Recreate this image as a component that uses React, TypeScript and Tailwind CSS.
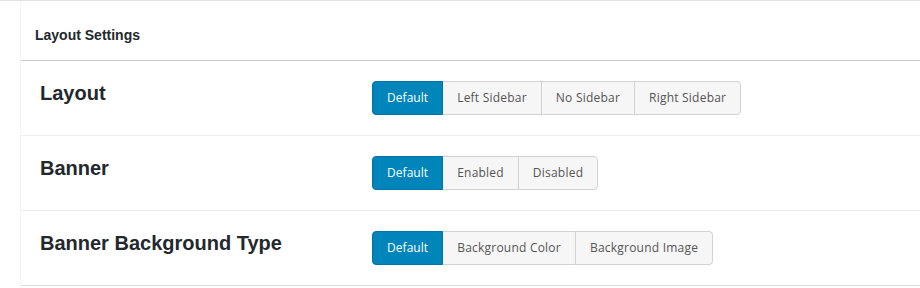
import React from 'react'

type Row = {
  label: string
  options: string[]
}

const rows: Row[] = [
  { label: 'Layout', options: ['Default', 'Left Sidebar', 'No Sidebar', 'Right Sidebar'] },
  { label: 'Banner', options: ['Default', 'Enabled', 'Disabled'] },
  { label: 'Banner Background Type', options: ['Default', 'Background Color', 'Background Image'] },
]

const ButtonGroup = ({ options, value }: { options: string[]; value: string }) => {
  return (
    <div className="flex">
      {options.map((opt, i) => {
        const active = opt === value
        return (
          <button
            key={opt}
            className={`h-[34px] px-[14px] border text-[12px] leading-[16px] font-['Open_Sans',sans-serif] ${
              active ? 'tracking-[0.05px]' : 'tracking-[0.22px]'
            } ${i > 0 ? '-ml-px' : ''} ${i === 0 ? 'rounded-l-[4px]' : ''} ${
              i === options.length - 1 ? 'rounded-r-[4px]' : ''
            } ${
              active
                ? 'relative z-10 bg-[#0085ba] border-[#0073aa] text-white'
                : 'bg-[#f6f6f6] border-[#d2d2d2] text-[#555]'
            }`}
          >
            {opt}
          </button>
        )
      })}
    </div>
  )
}

const SettingRow = ({ row, last }: { row: Row; last: boolean }) => {
  return (
    <div
      className={`flex items-start pl-[19px] pt-[20px] pb-[20px] border-b ${
        last ? 'border-[#dcdcdc]' : 'border-[#eeeeee]'
      }`}
    >
      <div className="w-[332px] mt-[1px] text-[20px] leading-[23px] font-bold text-[#23282d] font-['Liberation_Sans',Arial,sans-serif]">
        {row.label}
      </div>
      <ButtonGroup options={row.options} value="Default" />
    </div>
  )
}

export default function App() {
  return (
    <div className="w-[920px] h-[288px] bg-white border-t border-[#e2e2e2]">
      <div className="ml-[20px] border-l border-[#f4f4f4]">
        <div className="h-[60px] border-b border-[#c9c9c9] pl-[14px] pt-[26px]">
          <div className="text-[14px] leading-[16px] font-bold text-[#23282d] font-['Liberation_Sans',Arial,sans-serif]">
            Layout Settings
          </div>
        </div>
        {rows.map((row, i) => (
          <SettingRow key={row.label} row={row} last={i === rows.length - 1} />
        ))}
      </div>
    </div>
  )
}
